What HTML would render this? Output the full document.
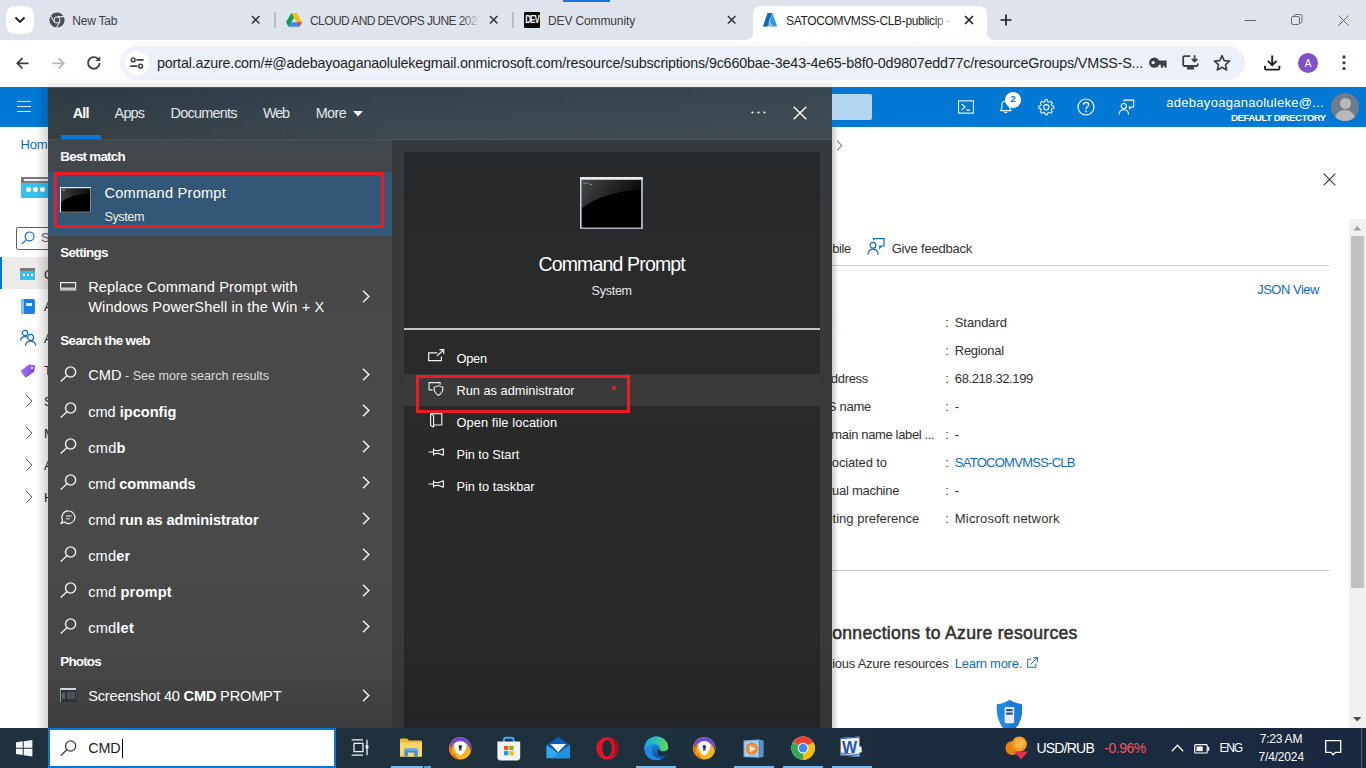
<!DOCTYPE html>
<html lang="en"><head><meta charset="utf-8"><title>SATOCOMVMSS-CLB-publicip - Microsoft Azure</title><style>
*{margin:0;padding:0;box-sizing:border-box}
html,body{width:1366px;height:768px;overflow:hidden;background:#fff}
body{font-family:"Liberation Sans",sans-serif;position:relative}
.a{position:absolute}
.t{position:absolute;white-space:nowrap;line-height:1;font-family:"Liberation Sans",sans-serif}
svg{position:absolute;overflow:visible}
b{font-weight:700}
</style></head><body>
<div class="a" id="tabstrip" style="left:0;top:0;width:1366px;height:40px;background:#dfe3eb"></div>
<div class="a" style="left:6px;top:6px;width:28px;height:28px;border-radius:9px;background:#fff"></div>
<svg style="left:14px;top:16px" width="12" height="8" viewBox="0 0 12 8"><path d="M1.5 1.5 L6 6 L10.5 1.5" fill="none" stroke="#1f1f1f" stroke-width="1.9"/></svg>
<div class="a" style="left:563px;top:0;width:47px;height:1.5px;background:#1a73e8"></div>
<!-- toolbar -->
<div class="a" style="left:0;top:40px;width:1366px;height:47px;background:#fff;border-radius:9px 9px 0 0"></div>
<!-- active tab -->
<svg style="left:745px;top:6px" width="250" height="34" viewBox="0 0 250 35" preserveAspectRatio="none"><path d="M0 35 Q8 35 8 27 L8 9 Q8 0 17 0 L233 0 Q242 0 242 9 L242 27 Q242 35 250 35 Z" fill="#fff"/></svg>
<!-- tab separators -->
<div class="a" style="left:274px;top:12px;width:2px;height:16px;background:#b9bcc4"></div>
<div class="a" style="left:512px;top:12px;width:2px;height:16px;background:#b9bcc4"></div>
<!-- tab1 icon: chrome grey -->
<svg style="left:49px;top:12px" width="16" height="16" viewBox="0 0 16 16"><circle cx="8" cy="8" r="7.6" fill="#4a4d51"/><circle cx="8" cy="8" r="3.4" fill="#dfe3eb"/><circle cx="8" cy="8" r="2.4" fill="#4a4d51"/><path d="M8 4.6 L15 4.6 M5.1 9.7 L1.6 3.7 M10.9 9.7 L7.4 15.6" stroke="#dfe3eb" stroke-width="1.1"/></svg>
<span class="t" style="font-size:12px;top:15.02px;color:#3c4043;left:72.3px;letter-spacing:-0.212px;">New Tab</span>
<svg style="left:251px;top:15px" width="9.4" height="9.4" viewBox="0 0 10 10"><path d="M1 1 L9 9 M9 1 L1 9" stroke="#2d2f33" stroke-width="1.55"/></svg>
<!-- tab2 drive icon -->
<svg style="left:286px;top:13px" width="16" height="14" viewBox="0 0 16 14"><path d="M5.4 0 L10.6 0 L16 9.3 L10.8 9.3 Z" fill="#fbbc04"/><path d="M5.4 0 L0 9.3 L2.6 13.8 L8 4.5 Z" fill="#0f9d58"/><path d="M2.6 13.8 L13.4 13.8 L16 9.3 L5.2 9.3 Z" fill="#4285f4"/><path d="M10.8 9.3 L16 9.3 L13.4 13.8 Z" fill="#ea4335"/></svg>
<span class="t" style="font-size:12px;top:15.02px;color:#3c4043;left:310px;letter-spacing:-0.576px;">CLOUD AND DEVOPS JUNE 202</span>
<div class="a" style="left:462px;top:10px;width:18px;height:22px;background:linear-gradient(90deg,rgba(223,227,235,0),#dfe3eb)"></div>
<svg style="left:489px;top:15px" width="9.4" height="9.4" viewBox="0 0 10 10"><path d="M1 1 L9 9 M9 1 L1 9" stroke="#2d2f33" stroke-width="1.55"/></svg>
<!-- tab3 dev icon -->
<div class="a" style="left:524px;top:12px;width:16px;height:16px;background:#0a0a0a;border-radius:1px"></div>
<span class="t" style="font-size:8px;top:16.38px;color:#fff;font-weight:700;left:525.2px;letter-spacing:-0.951px;transform-origin:0 50%;transform:scaleY(1.35);">DEV</span><span class="t" style="font-size:12px;top:15.02px;color:#3c4043;left:548px;letter-spacing:-0.130px;">DEV Community</span>
<svg style="left:727px;top:15px" width="9.4" height="9.4" viewBox="0 0 10 10"><path d="M1 1 L9 9 M9 1 L1 9" stroke="#2d2f33" stroke-width="1.55"/></svg>
<!-- tab4 azure icon -->
<svg style="left:762px;top:12px" width="16" height="16" viewBox="0 0 16 16"><path d="M5.6 1 L10.2 1 L5.3 14.6 L1 14.6 Z" fill="#1277c9"/><path d="M10.3 1 L15.2 14.6 L6.3 14.6 L10.6 13.8 L7.5 9.9 L9.2 5 Z" fill="#2a9be6"/><path d="M5.6 1 L10.2 1 L8.6 5.6 L6.2 9.3 L9.8 13.6 L5.3 14.6 L1 14.6 Z" fill="#0f5ea8" opacity=".55"/></svg>
<span class="t" style="font-size:12px;top:15.02px;color:#1f1f1f;left:786px;letter-spacing:-0.344px;">SATOCOMVMSS-CLB-publicip -</span>
<div class="a" style="left:934px;top:10px;width:18px;height:22px;background:linear-gradient(90deg,rgba(255,255,255,0),#fff)"></div>
<svg style="left:964px;top:15px" width="10" height="10" viewBox="0 0 10 10"><path d="M1 1 L9 9 M9 1 L1 9" stroke="#1f1f1f" stroke-width="1.6"/></svg>
<svg style="left:1000px;top:14px" width="12" height="12" viewBox="0 0 12 12"><path d="M6 0.5 V11.5 M0.5 6 H11.5" stroke="#1f1f1f" stroke-width="1.7"/></svg>
<!-- window controls -->
<div class="a" style="left:1245px;top:20px;width:11px;height:1px;background:#5f6368"></div>
<svg style="left:1291px;top:14px" width="12" height="12" viewBox="0 0 12 12"><rect x="0.5" y="2.5" width="8" height="8" rx="1.5" fill="none" stroke="#6b6f75" stroke-width="1"/><path d="M3 2.5 V2 Q3 0.5 4.5 0.5 H9.5 Q11 0.5 11 2 V7.5 Q11 9 9.5 9 H9" fill="none" stroke="#6b6f75" stroke-width="1"/></svg>
<svg style="left:1338px;top:15px" width="11" height="11" viewBox="0 0 11 11"><path d="M0.5 0.5 L10.5 10.5 M10.5 0.5 L0.5 10.5" stroke="#5f6368" stroke-width="1"/></svg>
<!-- nav buttons -->
<svg style="left:16px;top:56.6px" width="13" height="12.6" viewBox="0 0 15 14"><path d="M7.5 1 L1.5 7 L7.5 13 M1.5 7 H14.5" fill="none" stroke="#3c4043" stroke-width="2"/></svg>
<svg style="left:52px;top:56.6px" width="13" height="12.6" viewBox="0 0 15 14"><path d="M7.5 1 L13.5 7 L7.5 13 M13.5 7 H0.5" fill="none" stroke="#b4b7bb" stroke-width="2"/></svg>
<svg style="left:86px;top:55px" width="16" height="16" viewBox="0 0 16 16"><path d="M13.6 8 A5.8 5.8 0 1 1 11.9 3.8" fill="none" stroke="#3c4043" stroke-width="1.8"/><path d="M14.2 1.2 V6 H9.4 Z" fill="#3c4043"/></svg>
<!-- omnibox -->
<div class="a" style="left:120px;top:46px;width:1125px;height:34px;border-radius:17px;background:#edf1fa"></div>
<div class="a" style="left:125px;top:51px;width:24px;height:24px;border-radius:12px;background:#fff"></div>
<svg style="left:130px;top:57px" width="14" height="12" viewBox="0 0 14 12"><path d="M7 2.8 H13 M1 9.2 H6.6" stroke="#3c4043" stroke-width="1.7" stroke-linecap="round"/><circle cx="3.2" cy="2.8" r="1.9" fill="none" stroke="#3c4043" stroke-width="1.5"/><circle cx="10.6" cy="9.2" r="1.9" fill="none" stroke="#3c4043" stroke-width="1.5"/></svg>
<span class="t" style="font-size:14.3px;top:56.27px;color:#1f1f1f;left:157px;letter-spacing:-0.180px;">portal.azure.com/#@adebayoaganaolulekegmail.onmicrosoft.com/resource/subscriptions/9c660bae-3e43-4e65-b8f0-0d9807edd77c/resourceGroups/VMSS-S...</span>
<!-- key icon -->
<svg style="left:1149.2px;top:57.4px" width="18" height="12" viewBox="0 0 18 12"><circle cx="5.3" cy="5.6" r="5.2" fill="#3c4043"/><circle cx="4.2" cy="5.6" r="1.7" fill="#edf1fa"/><path d="M9 3.5 H17.6 V10.8 H15.6 V9 H14 V10.8 H11.8 V7.7 H9 Z" fill="#3c4043"/></svg>
<!-- install icon -->
<svg style="left:1181.6px;top:55.4px" width="17" height="15" viewBox="0 0 17 15"><path d="M8 1.2 H2.4 Q1.2 1.2 1.2 2.4 V9.8 Q1.2 11 2.4 11 H14.6 Q15.8 11 15.8 9.8 V8.6" fill="none" stroke="#3c4043" stroke-width="1.8"/><path d="M5.4 11 H11.6 L12.2 14.4 H4.8 Z" fill="#3c4043"/><path d="M12.6 0.3 V6.4 M9.9 3.8 L12.6 6.6 L15.3 3.8" fill="none" stroke="#3c4043" stroke-width="1.7"/></svg>
<!-- star -->
<svg style="left:1213px;top:54px" width="18" height="17" viewBox="0 0 18 17"><path d="M9 1.6 L11.2 6.6 L16.6 7.1 L12.5 10.7 L13.7 16 L9 13.2 L4.3 16 L5.5 10.7 L1.4 7.1 L6.8 6.6 Z" fill="none" stroke="#3c4043" stroke-width="1.6" stroke-linejoin="round"/></svg>
<!-- download -->
<svg style="left:1264px;top:55px" width="16.4" height="16" viewBox="0 0 16.4 16"><path d="M8.2 0.4 V10 M3.8 5.8 L8.2 10.2 L12.6 5.8" fill="none" stroke="#1f1f1f" stroke-width="1.9"/><path d="M1 10.8 V13.4 Q1 14.6 2.2 14.6 H14.2 Q15.4 14.6 15.4 13.4 V10.8" fill="none" stroke="#1f1f1f" stroke-width="1.9"/></svg>
<!-- avatar -->
<div class="a" style="left:1298px;top:53px;width:20px;height:20px;border-radius:10px;background:#7f50c6"></div>
<span class="t" style="font-size:10px;top:58.80px;color:#fff;left:1308px;transform:translateX(-50%);">A</span>
<svg style="left:1341.8px;top:55.2px" width="4" height="16" viewBox="0 0 4 16"><circle cx="2" cy="2" r="1.65" fill="#3c4043"/><circle cx="2" cy="7.8" r="1.65" fill="#3c4043"/><circle cx="2" cy="13.6" r="1.65" fill="#3c4043"/></svg>

<div class="a" style="left:0;top:87px;width:1366px;height:40px;background:#0078d4"></div>
<div class="a" style="left:17px;top:101px;width:14px;height:1px;background:#dcebf9"></div>
<div class="a" style="left:17px;top:106px;width:14px;height:1px;background:#dcebf9"></div>
<div class="a" style="left:17px;top:111px;width:14px;height:1px;background:#dcebf9"></div>
<div class="a" style="left:600px;top:94px;width:272px;height:26px;border-radius:2px;background:#b3d6f2"></div>
<!-- cloud shell -->
<svg style="left:958px;top:100px" width="16" height="14" viewBox="0 0 18 15"><rect x="0.6" y="0.6" width="16.8" height="13.8" fill="none" stroke="#fff" stroke-width="1.2"/><path d="M4 4 L8 7.5 L4 11 M9.5 11 H13.5" fill="none" stroke="#fff" stroke-width="1.2"/></svg>
<!-- bell -->
<svg style="left:999.4px;top:98.6px" width="13.6" height="15.6" viewBox="0 0 16 18"><path d="M2 13.5 V12.6 L3.4 11 V7 Q3.4 2.6 8 2.6 Q12.6 2.6 12.6 7 V11 L14 12.6 V13.5 Z" fill="none" stroke="#fff" stroke-width="1.2" stroke-linejoin="round"/><path d="M6.3 15 Q8 17.2 9.7 15" fill="none" stroke="#fff" stroke-width="1.2"/></svg>
<div class="a" style="left:1005px;top:92px;width:16px;height:16px;border-radius:8px;background:#fff"></div>
<span class="t" style="font-size:9.8px;top:94.45px;color:#0078d4;font-weight:700;left:1013px;transform:translateX(-50%);">2</span>
<!-- gear -->
<svg style="left:1037.7px;top:98.7px" width="16.6" height="16.6" viewBox="0 0 18 18"><circle cx="9" cy="9" r="2.9" fill="none" stroke="#fff" stroke-width="1.1"/><path d="M7.72 0.90 L10.28 0.90 L10.57 2.90 L12.21 3.58 L13.82 2.37 L15.63 4.18 L14.42 5.79 L15.10 7.43 L17.10 7.72 L17.10 10.28 L15.10 10.57 L14.42 12.21 L15.63 13.82 L13.82 15.63 L12.21 14.42 L10.57 15.10 L10.28 17.10 L7.72 17.10 L7.43 15.10 L5.79 14.42 L4.18 15.63 L2.37 13.82 L3.58 12.21 L2.90 10.57 L0.90 10.28 L0.90 7.72 L2.90 7.43 L3.58 5.79 L2.37 4.18 L4.18 2.37 L5.79 3.58 L7.43 2.90 Z" fill="none" stroke="#fff" stroke-width="1.1" stroke-linejoin="round"/></svg>
<!-- help -->
<svg style="left:1077px;top:98px" width="18" height="18" viewBox="0 0 18 18"><circle cx="9" cy="9" r="8" fill="none" stroke="#fff" stroke-width="1.2"/><path d="M6.4 7 Q6.4 4.4 9 4.4 Q11.6 4.4 11.6 6.8 Q11.6 8.2 10.2 9 Q9 9.8 9 11.2" fill="none" stroke="#fff" stroke-width="1.3"/><circle cx="9" cy="13.4" r="0.9" fill="#fff"/></svg>
<!-- feedback -->
<svg style="left:1118px;top:98.6px" width="16.6" height="16.6" viewBox="0 0 19 18"><circle cx="6.6" cy="7.6" r="3" fill="none" stroke="#fff" stroke-width="1.2"/><path d="M1 17.4 Q1.6 11.8 6.6 11.8 Q11.6 11.8 12.2 17.4" fill="none" stroke="#fff" stroke-width="1.2"/><path d="M7 2.6 V0.8 H18 V8.6 H15.4 L13.6 10.6 V8.6 H12" fill="none" stroke="#fff" stroke-width="1.2"/></svg>
<span class="t" style="font-size:13px;top:96.02px;color:#fff;left:1166.3px;letter-spacing:0.280px;">adebayoaganaoluleke@...</span><span class="t" style="font-size:9.7px;top:113.02px;color:#fff;font-weight:700;left:1231px;letter-spacing:-0.492px;">DEFAULT DIRECTORY</span>
<div class="a" style="left:1331px;top:93px;width:28px;height:28px;border-radius:14px;background:#6f7c8c;overflow:hidden"><div class="a" style="left:8.5px;top:5px;width:11px;height:11px;border-radius:6px;background:#b9b9b9"></div><div class="a" style="left:4px;top:16.5px;width:20px;height:16px;border-radius:9px 9px 0 0;background:#b9b9b9"></div></div>

<!-- left blade (clipped at panel) -->
<div class="a" style="left:0;top:127px;width:48px;height:601px;overflow:hidden">
  <div class="a" style="left:0;top:130px;width:60px;height:32px;background:#edebe9"></div>
  <div class="a" style="left:0;top:130px;width:2px;height:32px;background:#0078d4"></div>
  <div class="a" style="left:16px;top:100px;width:60px;height:23px;border:1px solid #605e5c;border-radius:2px;background:#fff"></div>
  <svg style="left:21px;top:104px" width="14" height="14" viewBox="0 0 14 14"><circle cx="8.6" cy="5.4" r="4.4" fill="none" stroke="#0f6cbd" stroke-width="1.2"/><path d="M5.4 8.6 L0.8 13.2" stroke="#0f6cbd" stroke-width="1.2"/></svg>
  <!-- resource icon -->
  <div class="a" style="left:21px;top:50px;width:40px;height:21px;background:#35c3ee;border-radius:1px"></div>
  <div class="a" style="left:21px;top:50px;width:40px;height:6px;background:#7a7a7a"></div>
  <div class="a" style="left:24px;top:52px;width:34px;height:2px;background:#f2f2f2"></div>
  <div class="a" style="left:26px;top:60px;width:5px;height:5px;border-radius:3px;background:#fff"></div>
  <div class="a" style="left:33px;top:60px;width:5px;height:5px;border-radius:3px;background:#fff"></div>
  <div class="a" style="left:40px;top:60px;width:5px;height:5px;border-radius:3px;background:#fff"></div>
  <!-- small overview icon -->
  <div class="a" style="left:20px;top:141px;width:15px;height:12px;background:#35c3ee"></div>
  <div class="a" style="left:20px;top:141px;width:15px;height:3px;background:#7a7a7a"></div>
  <div class="a" style="left:22.5px;top:147px;width:2px;height:2px;background:#fff"></div><div class="a" style="left:26.5px;top:147px;width:2px;height:2px;background:#fff"></div><div class="a" style="left:30.5px;top:147px;width:2px;height:2px;background:#fff"></div>
  <!-- book -->
  <div class="a" style="left:21px;top:172px;width:14px;height:15px;border-radius:2px;background:#1f7fe0"></div>
  <div class="a" style="left:21px;top:172px;width:3px;height:15px;border-radius:2px 0 0 2px;background:#7cc0f5"></div>
  <div class="a" style="left:26px;top:176px;width:6px;height:3px;background:#e6f2fd"></div>
  <!-- people -->
  <svg style="left:20px;top:202px" width="17" height="17" viewBox="0 0 17 17"><circle cx="5" cy="4" r="2.7" fill="none" stroke="#0f6cbd" stroke-width="1.2"/><path d="M0.6 11.5 Q1 7.6 5 7.6 Q6.6 7.6 7.6 8.4" fill="none" stroke="#0f6cbd" stroke-width="1.2"/><circle cx="10.6" cy="8.4" r="3" fill="none" stroke="#0f6cbd" stroke-width="1.2"/><path d="M5.4 16.6 Q6 12.2 10.6 12.2 Q15.2 12.2 15.8 16.6" fill="none" stroke="#0f6cbd" stroke-width="1.2"/></svg>
  <!-- tag -->
  <svg style="left:20.6px;top:234.6px" width="16" height="16" viewBox="0 0 16 16"><defs><linearGradient id="tg" x1="0" y1="0" x2="1" y2="1"><stop offset="0" stop-color="#a67af4"/><stop offset="1" stop-color="#773adc"/></linearGradient></defs><g transform="rotate(-36 8 8)"><path d="M0.6 5 Q0.6 3.6 2 3.6 H11.2 L15.6 8 L11.2 12.4 H2 Q0.6 12.4 0.6 11 Z" fill="url(#tg)"/><circle cx="11.6" cy="8" r="1.2" fill="#f1e9ff"/></g></svg>
  <svg style="left:25px;top:267px" width="8" height="14" viewBox="0 0 8 14"><path d="M1 1 L7 7 L1 13" fill="none" stroke="#605e5c" stroke-width="1"/></svg><svg style="left:25px;top:299px" width="8" height="14" viewBox="0 0 8 14"><path d="M1 1 L7 7 L1 13" fill="none" stroke="#605e5c" stroke-width="1"/></svg><svg style="left:25px;top:331px" width="8" height="14" viewBox="0 0 8 14"><path d="M1 1 L7 7 L1 13" fill="none" stroke="#605e5c" stroke-width="1"/></svg><svg style="left:25px;top:363px" width="8" height="14" viewBox="0 0 8 14"><path d="M1 1 L7 7 L1 13" fill="none" stroke="#605e5c" stroke-width="1"/></svg>
  <span class="t" style="left:20.4px;top:11px;font-size:13px;color:#0f6cbd;letter-spacing:-0.1px">Home</span>
  <span class="t" style="left:41px;top:104px;font-size:13px;color:#605e5c">Search</span>
  <span class="t" style="left:44px;top:141px;font-size:13px;color:#201f1e">Overview</span>
  <span class="t" style="left:44px;top:173px;font-size:13px;color:#201f1e">Activity log</span>
  <span class="t" style="left:44px;top:205px;font-size:13px;color:#201f1e">Access control (IAM)</span>
  <span class="t" style="left:44px;top:237px;font-size:13px;color:#201f1e">Tags</span>
  <span class="t" style="left:44px;top:268px;font-size:13px;color:#201f1e">Settings</span>
  <span class="t" style="left:44px;top:300px;font-size:13px;color:#201f1e">Monitoring</span>
  <span class="t" style="left:44px;top:332px;font-size:13px;color:#201f1e">Automation</span>
  <span class="t" style="left:44px;top:364px;font-size:13px;color:#201f1e">Help</span>
</div>

<!-- right content -->
<svg style="left:836px;top:140px" width="7" height="11" viewBox="0 0 7 11"><path d="M1 0.7 L6 5.5 L1 10.3" fill="none" stroke="#605e5c" stroke-width="1"/></svg>
<svg style="left:1323px;top:173px" width="13" height="13" viewBox="0 0 13 13"><path d="M0.7 0.7 L12.3 12.3 M12.3 0.7 L0.7 12.3" stroke="#323130" stroke-width="1.1"/></svg>
<span class="t" style="font-size:13px;top:242.02px;color:#323130;left:832.2px;letter-spacing:-0.362px;">bile</span>
<svg style="left:867px;top:238px" width="18" height="17" viewBox="0 0 18 17"><circle cx="6" cy="7.2" r="2.9" fill="none" stroke="#0f6cbd" stroke-width="1.2"/><path d="M0.8 16.6 Q1.4 11.2 6 11.2 Q10.6 11.2 11.2 16.6" fill="none" stroke="#0f6cbd" stroke-width="1.2"/><path d="M6.6 2.4 V0.7 H17 V8 H14.6 L12.8 9.9 V8 H11.6" fill="none" stroke="#0f6cbd" stroke-width="1.2"/></svg>
<span class="t" style="font-size:13px;top:242.02px;color:#323130;left:891.7px;letter-spacing:-0.208px;">Give feedback</span>
<div class="a" style="left:832px;top:265px;width:497px;height:1px;background:#c8c6c4"></div>
<div class="a" style="left:832px;top:270px;width:497px;height:1px;background:#f0efee"></div>
<span class="t" style="font-size:13px;top:283.02px;color:#0f6cbd;left:1257.2px;letter-spacing:-0.493px;">JSON View</span><span class="t" style="font-size:13px;top:316.02px;color:#0f6cbd;right:533.5px;letter-spacing:-0.2px;">SKU</span><span class="t" style="font-size:13px;top:316.02px;color:#323130;left:945.3px;">:</span><span class="t" style="font-size:13px;top:316.02px;color:#323130;left:954.8px;letter-spacing:-0.096px;">Standard</span><span class="t" style="font-size:13px;top:344.02px;color:#323130;right:540px;letter-spacing:-0.2px;">Tier</span><span class="t" style="font-size:13px;top:344.02px;color:#323130;left:945.3px;">:</span><span class="t" style="font-size:13px;top:344.02px;color:#323130;left:954.8px;letter-spacing:-0.291px;">Regional</span><span class="t" style="font-size:13px;top:372.02px;color:#323130;right:498px;letter-spacing:-0.3px;">IP address</span><span class="t" style="font-size:13px;top:372.02px;color:#323130;left:945.3px;">:</span><span class="t" style="font-size:13px;top:372.02px;color:#323130;left:954.8px;letter-spacing:-0.395px;">68.218.32.199</span><span class="t" style="font-size:13px;top:400.02px;color:#323130;right:495px;letter-spacing:-0.27px;">DNS name</span><span class="t" style="font-size:13px;top:400.02px;color:#323130;left:945.3px;">:</span><span class="t" style="font-size:13px;top:400.02px;color:#323130;left:954.8px;">-</span><span class="t" style="font-size:13px;top:428.02px;color:#323130;right:431.7px;letter-spacing:-0.36px;">Domain name label ...</span><span class="t" style="font-size:13px;top:428.02px;color:#323130;left:945.3px;">:</span><span class="t" style="font-size:13px;top:428.02px;color:#323130;left:954.8px;">-</span><span class="t" style="font-size:13px;top:456.02px;color:#323130;right:479.2px;letter-spacing:-0.14px;">Associated to</span><span class="t" style="font-size:13px;top:456.02px;color:#323130;left:945.3px;">:</span><span class="t" style="font-size:13px;top:456.02px;color:#0f6cbd;left:954.8px;letter-spacing:-0.732px;">SATOCOMVMSS-CLB</span><span class="t" style="font-size:13px;top:484.02px;color:#323130;right:466.9px;letter-spacing:-0.28px;">Virtual machine</span><span class="t" style="font-size:13px;top:484.02px;color:#323130;left:945.3px;">:</span><span class="t" style="font-size:13px;top:484.02px;color:#323130;left:954.8px;">-</span><span class="t" style="font-size:13px;top:512.02px;color:#323130;right:446.7px;letter-spacing:0px;">Routing preference</span><span class="t" style="font-size:13px;top:512.02px;color:#323130;left:945.3px;">:</span><span class="t" style="font-size:13px;top:512.02px;color:#323130;left:954.8px;letter-spacing:0.184px;">Microsoft network</span>
<div class="a" style="left:832px;top:570px;width:497px;height:1px;background:#c8c6c4"></div>
<span class="t" style="font-size:17.6px;top:625.02px;color:#323130;left:832.2px;letter-spacing:0.304px;-webkit-text-stroke:0.55px #323130;">onnections to Azure resources</span><span class="t" style="font-size:13px;top:657.02px;color:#323130;left:832.2px;letter-spacing:-0.260px;">ious Azure resources</span><span class="t" style="font-size:13px;top:657.02px;color:#0f6cbd;left:954.8px;letter-spacing:-0.263px;">Learn more.</span>
<svg style="left:1027px;top:657px" width="11" height="11" viewBox="0 0 11 11"><path d="M4.4 2.2 H0.7 V10.3 H8.8 V6.6 M3.6 7.4 L10.2 0.8 M6.4 0.6 H10.4 V4.6" fill="none" stroke="#0f6cbd" stroke-width="1"/></svg>
<!-- shield -->
<svg style="left:995.6px;top:698.6px" width="26.8" height="37" viewBox="0 0 28 38"><path d="M14 0.4 Q19.6 4.4 27 5 Q29.4 24 14 37.4 Q-1.4 24 1 5 Q8.4 4.4 14 0.4 Z" fill="#2188e4"/><path d="M14 0.4 Q19.6 4.4 27 5 Q29.4 24 14 37.4 Z" fill="#1a7bd8"/><rect x="9" y="8" width="10" height="17" rx="1.2" fill="#e9edf2"/><rect x="10.6" y="10.2" width="6.8" height="2.2" fill="#1c4f8f"/><rect x="10.6" y="13.8" width="6.8" height="2.2" fill="#1c4f8f"/></svg>
<!-- scrollbar -->
<div class="a" style="left:1349px;top:219px;width:17px;height:509px;background:#f1f1f1"></div>
<div class="a" style="left:1351px;top:236px;width:13px;height:352px;background:#c1c1c1"></div>
<svg style="left:1353.4px;top:225.6px" width="8.4" height="4.6" viewBox="0 0 9 5"><path d="M0 5 L4.5 0 L9 5 Z" fill="#a3a3a3"/></svg>
<svg style="left:1353.4px;top:716.5px" width="8.4" height="4.6" viewBox="0 0 9 5"><path d="M0 0 L4.5 5 L9 0 Z" fill="#505050"/></svg>

<!-- shadow left of panel -->
<div class="a" style="left:36px;top:87px;width:12px;height:641px;background:linear-gradient(90deg,rgba(0,0,0,0),rgba(0,0,0,.16))"></div>
<div class="a" style="left:48px;top:78px;width:784px;height:9px;background:linear-gradient(180deg,rgba(0,0,0,0),rgba(0,0,0,.09))"></div>
<div class="a" style="left:832px;top:127px;width:7px;height:601px;background:linear-gradient(90deg,rgba(0,0,0,.2),rgba(0,0,0,0))"></div>
<div class="a" id="panel" style="left:48px;top:87px;width:784px;height:641px;background:#2f3336;overflow:hidden">
  <!-- header -->
  <div class="a" style="left:0;top:0;width:784px;height:53px;background:linear-gradient(90deg,rgba(0,0,0,.12) 0%,rgba(0,0,0,0) 45%,rgba(255,255,255,.02) 100%),linear-gradient(180deg,#33424e 0%,#3a464f 55%,#3f474c 100%)"></div>
  <div class="a" style="left:0;top:0;width:784px;height:1px;background:#1f5e96"></div>
  <div class="a" style="left:0;top:52px;width:784px;height:1px;background:#4a5359"></div>
  <!-- left column -->
  <div class="a" style="left:0;top:53px;width:344px;height:588px;background:linear-gradient(180deg,#41484d 0%,#454647 12%,#494949 35%,#4a4a4a 60%,#474747 88%,#3d3d3d 100%)"></div>
  <!-- right column -->
  <div class="a" style="left:344px;top:53px;width:440px;height:588px;background:linear-gradient(180deg,#33393d 0%,#39393a 18%,#3a3a3a 85%,#343434 100%)"></div>
  <div class="a" style="left:356px;top:65px;width:416px;height:576px;background:linear-gradient(180deg,#26292b 0%,#2a2a2a 22%,#292929 80%,#242526 100%)"></div>
  <!-- tab underline -->
  <div class="a" style="left:13px;top:48px;width:40px;height:4px;background:#0a78d7"></div>
  <!-- selected -->
  <div class="a" style="left:0;top:85px;width:344px;height:64px;background:#335877"></div>
  <div class="a" style="left:6px;top:85px;width:330px;height:56px;border:3px solid #ed1c24"></div>
  <!-- cmd icon small -->
  <svg style="left:12px;top:99.6px" width="31" height="25.6" viewBox="0 0 31 25.6"><defs><linearGradient id="cg1" x1="0" y1="0" x2="1" y2="0"><stop offset="0" stop-color="#3c3c3c"/><stop offset="1" stop-color="#0c0c0c"/></linearGradient></defs><rect x="0" y="0" width="31" height="25.6" fill="#000"/><path d="M1 1 H30 V6.2 Q12 7 1 15 Z" fill="url(#cg1)"/><path d="M0.5 25.6 V0.6 H31" fill="none" stroke="#e4e4e4" stroke-width="1.1"/><path d="M30.5 1 V25.1 H1" fill="none" stroke="#8a8a8a" stroke-width="1"/><rect x="2.4" y="2.6" width="2.6" height="0.9" fill="#bbb"/></svg>
  <!-- hover row in actions -->
  <div class="a" style="left:356px;top:287px;width:416px;height:32px;background:#3a3a3a"></div>
  <div class="a" style="left:356px;top:241px;width:416px;height:2px;background:#c2c2c2"></div>
  <div class="a" style="left:368px;top:288px;width:214px;height:38px;border:3px solid #ed1c24"></div>
  <div class="a" style="left:563.6px;top:298.8px;width:4.4px;height:4.4px;border-radius:2.2px;background:#ed1c24"></div>
  <!-- big cmd icon -->
  <svg style="left:532.4px;top:89.8px" width="62.8" height="52" viewBox="0 0 62.2 51.6" preserveAspectRatio="none"><defs><linearGradient id="cg2" x1="0" y1="0" x2="1" y2="0.3"><stop offset="0" stop-color="#474747"/><stop offset="1" stop-color="#0a0a0a"/></linearGradient></defs><rect x="0" y="0" width="62.2" height="51.6" fill="#000"/><path d="M1.5 3 H60.7 V12.6 Q24 14 1.5 31 Z" fill="url(#cg2)"/><path d="M0.8 51.6 V1.4 H61.4 V51.6" fill="none" stroke="#c9cfdb" stroke-width="1.6"/><path d="M0 1.4 H62.2" stroke="#e6e9ef" stroke-width="2.8"/><path d="M0 50.9 H62.2" stroke="#aab2c2" stroke-width="1.4"/><path d="M3.4 6.2 H6.6 M7.6 6.2 H9 M9.8 7.4 H11.6" stroke="#9a9a9a" stroke-width="1"/></svg>
</div>
<span class="t" style="font-size:14.4px;top:106.02px;color:#fff;left:72.7px;letter-spacing:-0.797px;"><b>All</b></span><span class="t" style="font-size:14.4px;top:106.02px;color:#e4e6e8;left:114.6px;letter-spacing:-0.803px;">Apps</span><span class="t" style="font-size:14.4px;top:106.02px;color:#e4e6e8;left:170.5px;letter-spacing:-0.722px;">Documents</span><span class="t" style="font-size:14.4px;top:106.02px;color:#e4e6e8;left:263px;letter-spacing:-1.115px;">Web</span><span class="t" style="font-size:14.4px;top:106.02px;color:#e4e6e8;left:315.7px;letter-spacing:-0.574px;">More</span><svg style="left:353px;top:111px" width="10" height="6" viewBox="0 0 10 6"><path d="M0 0 H10 L5 5.6 Z" fill="#f0f0f0"/></svg><svg style="left:751px;top:111px" width="15" height="3" viewBox="0 0 15 3"><circle cx="1.5" cy="1.5" r="1.1" fill="#fff"/><circle cx="7.5" cy="1.5" r="1.1" fill="#fff"/><circle cx="13.5" cy="1.5" r="1.1" fill="#fff"/></svg><svg style="left:793px;top:106px" width="14" height="14" viewBox="0 0 14 14"><path d="M0.7 0.7 L13.3 13.3 M13.3 0.7 L0.7 13.3" stroke="#fff" stroke-width="1.4"/></svg><span class="t" style="font-size:13.4px;top:150.02px;color:#fff;left:60.3px;letter-spacing:-0.759px;"><b>Best match</b></span><span class="t" style="font-size:14.6px;top:186.02px;color:#fff;left:104.4px;letter-spacing:0.227px;">Command Prompt</span><span class="t" style="font-size:12.6px;top:211.02px;color:#f0f0f0;left:104.4px;letter-spacing:-0.400px;">System</span><span class="t" style="font-size:13.4px;top:246.02px;color:#fff;left:60.3px;letter-spacing:-0.666px;"><b>Settings</b></span><svg style="left:60px;top:281.6px" width="16.2" height="8.6" viewBox="0 0 16.2 8.6"><rect x="0.6" y="0.6" width="15" height="5.6" fill="none" stroke="#f0f0f0" stroke-width="1.2"/><path d="M0 7.9 H16.2" stroke="#f0f0f0" stroke-width="1.2"/></svg><span class="t" style="font-size:14.6px;top:280.02px;color:#fff;left:88.2px;letter-spacing:0.129px;">Replace Command Prompt with</span><span class="t" style="font-size:14.6px;top:300.02px;color:#fff;left:88.2px;letter-spacing:0.115px;">Windows PowerShell in the Win + X</span><svg style="left:362px;top:289.5px" width="8" height="13" viewBox="0 0 8 13"><path d="M1 0.8 L6.8 6.5 L1 12.2" fill="none" stroke="#ececec" stroke-width="1.6"/></svg><span class="t" style="font-size:13.4px;top:334.02px;color:#fff;left:60.3px;letter-spacing:-0.624px;"><b>Search the web</b></span><svg style="left:60px;top:366.3px" width="17" height="16" viewBox="0 0 17 16"><circle cx="10.6" cy="6" r="5.1" fill="none" stroke="#f0f0f0" stroke-width="1.4"/><path d="M6.9 9.7 L0.7 15.4" stroke="#f0f0f0" stroke-width="1.4"/></svg><span class="t" style="font-size:14.6px;top:368.02px;color:#fff;left:88.2px;">CMD<span style="font-size:12.6px;color:#dcdcdc"> - See more search results</span></span><svg style="left:362px;top:367.9px" width="8" height="13" viewBox="0 0 8 13"><path d="M1 0.8 L6.8 6.5 L1 12.2" fill="none" stroke="#ececec" stroke-width="1.6"/></svg><svg style="left:60px;top:402.3px" width="17" height="16" viewBox="0 0 17 16"><circle cx="10.6" cy="6" r="5.1" fill="none" stroke="#f0f0f0" stroke-width="1.4"/><path d="M6.9 9.7 L0.7 15.4" stroke="#f0f0f0" stroke-width="1.4"/></svg><span class="t" style="font-size:14.6px;top:405.02px;color:#fff;left:88.2px;letter-spacing:-0.015px;">cmd <b>ipconfig</b></span><svg style="left:362px;top:403.9px" width="8" height="13" viewBox="0 0 8 13"><path d="M1 0.8 L6.8 6.5 L1 12.2" fill="none" stroke="#ececec" stroke-width="1.6"/></svg><svg style="left:60px;top:438.3px" width="17" height="16" viewBox="0 0 17 16"><circle cx="10.6" cy="6" r="5.1" fill="none" stroke="#f0f0f0" stroke-width="1.4"/><path d="M6.9 9.7 L0.7 15.4" stroke="#f0f0f0" stroke-width="1.4"/></svg><span class="t" style="font-size:14.6px;top:441.02px;color:#fff;left:88.2px;letter-spacing:0.250px;">cmd<b>b</b></span><svg style="left:362px;top:439.9px" width="8" height="13" viewBox="0 0 8 13"><path d="M1 0.8 L6.8 6.5 L1 12.2" fill="none" stroke="#ececec" stroke-width="1.6"/></svg><svg style="left:60px;top:474.3px" width="17" height="16" viewBox="0 0 17 16"><circle cx="10.6" cy="6" r="5.1" fill="none" stroke="#f0f0f0" stroke-width="1.4"/><path d="M6.9 9.7 L0.7 15.4" stroke="#f0f0f0" stroke-width="1.4"/></svg><span class="t" style="font-size:14.6px;top:477.02px;color:#fff;left:88.2px;letter-spacing:-0.114px;">cmd <b>commands</b></span><svg style="left:362px;top:475.9px" width="8" height="13" viewBox="0 0 8 13"><path d="M1 0.8 L6.8 6.5 L1 12.2" fill="none" stroke="#ececec" stroke-width="1.6"/></svg><svg style="left:60px;top:509.9px" width="17" height="16" viewBox="0 0 17 16"><path d="M8.8 1 A6.3 6.3 0 1 1 4.4 12 L1 13.6 L2.6 10.2 A6.3 6.3 0 0 1 8.8 1 Z" fill="none" stroke="#f0f0f0" stroke-width="1.2" stroke-linejoin="round"/><path d="M6 6 H11.6 M6 8.8 H9.6" stroke="#f0f0f0" stroke-width="1.1"/></svg><span class="t" style="font-size:14.6px;top:513.02px;color:#fff;left:88.2px;letter-spacing:-0.101px;">cmd <b>run as administrator</b></span><svg style="left:362px;top:511.9px" width="8" height="13" viewBox="0 0 8 13"><path d="M1 0.8 L6.8 6.5 L1 12.2" fill="none" stroke="#ececec" stroke-width="1.6"/></svg><svg style="left:60px;top:546.3px" width="17" height="16" viewBox="0 0 17 16"><circle cx="10.6" cy="6" r="5.1" fill="none" stroke="#f0f0f0" stroke-width="1.4"/><path d="M6.9 9.7 L0.7 15.4" stroke="#f0f0f0" stroke-width="1.4"/></svg><span class="t" style="font-size:14.6px;top:549.02px;color:#fff;left:88.2px;letter-spacing:0.125px;">cmd<b>er</b></span><svg style="left:362px;top:547.9px" width="8" height="13" viewBox="0 0 8 13"><path d="M1 0.8 L6.8 6.5 L1 12.2" fill="none" stroke="#ececec" stroke-width="1.6"/></svg><svg style="left:60px;top:582.3px" width="17" height="16" viewBox="0 0 17 16"><circle cx="10.6" cy="6" r="5.1" fill="none" stroke="#f0f0f0" stroke-width="1.4"/><path d="M6.9 9.7 L0.7 15.4" stroke="#f0f0f0" stroke-width="1.4"/></svg><span class="t" style="font-size:14.6px;top:585.02px;color:#fff;left:88.2px;letter-spacing:0.171px;">cmd <b>prompt</b></span><svg style="left:362px;top:583.9px" width="8" height="13" viewBox="0 0 8 13"><path d="M1 0.8 L6.8 6.5 L1 12.2" fill="none" stroke="#ececec" stroke-width="1.6"/></svg><svg style="left:60px;top:618.3px" width="17" height="16" viewBox="0 0 17 16"><circle cx="10.6" cy="6" r="5.1" fill="none" stroke="#f0f0f0" stroke-width="1.4"/><path d="M6.9 9.7 L0.7 15.4" stroke="#f0f0f0" stroke-width="1.4"/></svg><span class="t" style="font-size:14.6px;top:621.02px;color:#fff;left:88.2px;letter-spacing:0.198px;">cmd<b>let</b></span><svg style="left:362px;top:619.9px" width="8" height="13" viewBox="0 0 8 13"><path d="M1 0.8 L6.8 6.5 L1 12.2" fill="none" stroke="#ececec" stroke-width="1.6"/></svg><span class="t" style="font-size:13.4px;top:655.02px;color:#fff;left:60.3px;letter-spacing:-0.798px;"><b>Photos</b></span><div class="a" style="left:60px;top:688px;width:16px;height:14px;background:#2c3238;border-top:2px solid #cfd6dd;border-left:1px solid #8d98a3"><div class="a" style="left:6px;top:2px;width:8px;height:7px;background:#4a535c"></div><div class="a" style="left:1px;top:3px;width:3px;height:6px;background:#59636d"></div></div><span class="t" style="font-size:14.6px;top:689.02px;color:#fff;left:88.2px;letter-spacing:-0.196px;">Screenshot 40 <b>CMD</b> PROMPT</span><svg style="left:362px;top:688.5px" width="8" height="13" viewBox="0 0 8 13"><path d="M1 0.8 L6.8 6.5 L1 12.2" fill="none" stroke="#ececec" stroke-width="1.6"/></svg><span class="t" style="font-size:19.5px;top:255.02px;color:#fff;left:611.7px;transform:translateX(-50%);letter-spacing:-0.837px;">Command Prompt</span><span class="t" style="font-size:12.6px;top:285.02px;color:#e6e6e6;left:611.7px;transform:translateX(-50%);letter-spacing:-0.283px;">System</span><span class="t" style="font-size:12.8px;top:353.02px;color:#fff;left:456.4px;letter-spacing:-0.178px;">Open</span><span class="t" style="font-size:12.8px;top:385.02px;color:#fff;left:456.4px;letter-spacing:0.006px;">Run as administrator</span><span class="t" style="font-size:12.8px;top:417.02px;color:#fff;left:456.4px;letter-spacing:0.106px;">Open file location</span><span class="t" style="font-size:12.8px;top:449.02px;color:#fff;left:456.4px;letter-spacing:-0.043px;">Pin to Start</span><span class="t" style="font-size:12.8px;top:481.02px;color:#fff;left:456.4px;">Pin to taskbar</span>
<svg style="left:427.6px;top:349.4px" width="17" height="13" viewBox="0 0 17 13"><path d="M9.4 3.8 H0.7 V11.6 H13.4 V7.4" fill="none" stroke="#f0f0f0" stroke-width="1.2"/><path d="M9 7 L15.6 0.8 M11.4 0.7 H15.7 V5" fill="none" stroke="#f0f0f0" stroke-width="1.2"/></svg>
<svg style="left:427.8px;top:382.4px" width="16.4" height="14.6" viewBox="0 0 17 16"><path d="M4.4 8.6 H0.7 V0.7 H12.8 V3" fill="none" stroke="#f0f0f0" stroke-width="1.2"/><path d="M11 4 Q13.2 5.4 15.8 5.4 Q16.4 11.6 11 14.8 Q5.6 11.6 6.2 5.4 Q8.8 5.4 11 4 Z" fill="none" stroke="#f0f0f0" stroke-width="1.2" stroke-linejoin="round"/></svg>
<svg style="left:429.6px;top:413px" width="12.6" height="14.6" viewBox="0 0 12.6 14.6"><path d="M0.6 0.6 H11.8 V12 H3.6 M0.6 0.6 V12.4 L3.6 14 V2.6 L0.6 0.6" fill="none" stroke="#f0f0f0" stroke-width="1.15" stroke-linejoin="round"/></svg>
<svg style="left:428px;top:448px" width="16" height="8" viewBox="0 0 16 8"><path d="M0.5 4 H5.5 M5.5 0.6 V7.4 M5.5 1.8 Q8 3 10.5 2.6 L15.4 0.8 V7.2 L10.5 5.4 Q8 5 5.5 6.2" fill="none" stroke="#f0f0f0" stroke-width="1.15" stroke-linejoin="round"/></svg>
<svg style="left:428px;top:480px" width="16" height="8" viewBox="0 0 16 8"><path d="M0.5 4 H5.5 M5.5 0.6 V7.4 M5.5 1.8 Q8 3 10.5 2.6 L15.4 0.8 V7.2 L10.5 5.4 Q8 5 5.5 6.2" fill="none" stroke="#f0f0f0" stroke-width="1.15" stroke-linejoin="round"/></svg>

<div class="a" style="left:0;top:728px;width:1366px;height:40px;background:linear-gradient(90deg,#1e313c 0%,#1d303c 45%,#1b2d3d 68%,#1a2841 100%)"></div>
<!-- start -->
<svg style="left:16px;top:740.4px" width="16.4" height="16.4" viewBox="0 0 17 17"><path d="M0 2.4 L7 1.4 V8 H0 Z M8 1.2 L17 0 V8 H8 Z M0 9 H7 V15.6 L0 14.6 Z M8 9 H17 V17 L8 15.8 Z" fill="#f3f3f3"/></svg>
<!-- search box -->
<div class="a" style="left:48px;top:728px;width:288px;height:40px;background:#fff;border:2px solid #0a78d7"></div>
<svg style="left:60px;top:740px" width="17" height="16" viewBox="0 0 17 16"><circle cx="10.6" cy="6" r="5.1" fill="none" stroke="#3a3a3a" stroke-width="1.3"/><path d="M6.9 9.7 L0.7 15.4" stroke="#3a3a3a" stroke-width="1.3"/></svg><span class="t" style="font-size:14.4px;top:741.02px;color:#1a1a1a;left:88.2px;letter-spacing:-0.160px;">CMD</span>
<div class="a" style="left:121.5px;top:738.5px;width:1px;height:19px;background:#000"></div>
<!-- task view -->
<svg style="left:351px;top:739px" width="18" height="17" viewBox="0 0 18 17"><path d="M0.6 0.8 H12 M0.6 16.2 H12 M3 4.4 H12 V12.6 H3 Z M16 0.8 V16.2" fill="none" stroke="#f3f3f3" stroke-width="1.3"/><rect x="14.6" y="6.4" width="2.8" height="3" fill="#f3f3f3"/></svg>
<!-- explorer -->
<svg style="left:399.7px;top:738.4px" width="22" height="19" viewBox="0 0 22 19"><path d="M0 1.6 Q0 0.4 1.2 0.4 H7 L9 2.4 H20.8 Q22 2.4 22 3.6 V18.6 H0 Z" fill="#f0b62f"/><path d="M0 4.6 H22 V18.6 H0 Z" fill="#fad567"/><path d="M4.4 11.6 Q4.4 10.4 5.6 10.4 H16.4 Q17.6 10.4 17.6 11.6 V18.6 H4.4 Z" fill="#3a8fdd"/><path d="M4.4 11.4 Q4.4 10.4 5.6 10.4 H16.4 Q17.6 10.4 17.6 11.4 V12.6 H4.4 Z" fill="#5fb0ee"/><path d="M7.8 14.6 H14.2 V18.6 H7.8 Z" fill="#fad567"/></svg>
<svg style="left:448.7px;top:736.8px" width="22.6" height="22.6" viewBox="0 0 23 23"><circle cx="11.5" cy="11.5" r="11.3" fill="#f6b71d"/><path d="M11.5 0.2 A11.3 11.3 0 0 0 4 20 Q1.6 12 7.4 5.2 Q9.6 2.6 11.5 0.2 Z" fill="#f07a12"/><path d="M4 20 A11.3 11.3 0 0 0 11.5 22.8 Q6.4 21 4.4 15.4 Z" fill="#e8650e"/><path d="M1.2 7 A11.3 11.3 0 0 1 22.6 9.4 Q22.8 12.6 21.6 14.6 Q21.4 8.8 16.2 5.6 Q10.2 2.6 4.6 6.6 Q2.2 8.6 1.2 12 Q0.6 9.4 1.2 7 Z" fill="#7447d8"/><path d="M11.5 4.4 Q15.4 4.4 17.6 6.8 Q18.8 14.4 11.5 19 Q4.2 14.4 5.4 6.8 Q7.6 4.4 11.5 4.4 Z" fill="#fff"/><circle cx="11.5" cy="10" r="1.8" fill="#2b2f55"/><path d="M10.7 10.6 H12.3 L12.8 13.8 H10.2 Z" fill="#2b2f55"/></svg>
<!-- store -->
<svg style="left:496.8px;top:735.8px" width="23.6" height="24.6" viewBox="0 0 24 25"><path d="M7 7.4 V4.2 Q7 1.8 9.4 1.8 H14.6 Q17 1.8 17 4.2 V7.4" fill="none" stroke="#2bb3ee" stroke-width="2"/><path d="M0.4 5.6 H23.6 V21.6 Q23.6 24.8 20.4 24.8 H3.6 Q0.4 24.8 0.4 21.6 Z" fill="#f3f3f3"/><rect x="7.2" y="10" width="4.3" height="4.3" fill="#f25022"/><rect x="12.5" y="10" width="4.3" height="4.3" fill="#7fba00"/><rect x="7.2" y="15.3" width="4.3" height="4.3" fill="#00a4ef"/><rect x="12.5" y="15.3" width="4.3" height="4.3" fill="#ffb900"/></svg>
<!-- mail -->
<svg style="left:546px;top:736.4px" width="24.4" height="22.6" viewBox="0 0 25 23"><path d="M0.4 9.4 L12.5 0.4 L24.6 9.4 V14 H0.4 Z" fill="#0f5db3"/><path d="M4.6 8.2 H20.4 L12.5 16.6 Z" fill="#f4f9fd"/><path d="M0.4 9.4 L12.5 17.4 L24.6 9.4 V22.8 H0.4 Z" fill="#2fa9ee"/><path d="M24.6 9.4 V22.8 H6 Z" fill="#1f8fe0"/><path d="M0.4 22.8 L12.5 14.6 L24.6 22.8 Z" fill="#35b6f2" opacity=".0"/></svg>
<!-- opera -->
<svg style="left:595.6px;top:737.2px" width="22.6" height="22.6" viewBox="0 0 23 23"><ellipse cx="11.5" cy="11.5" rx="11.3" ry="11.3" fill="#e3122a"/><ellipse cx="11.2" cy="11.5" rx="4.9" ry="8.4" fill="#1d2f3b"/><path d="M14 2 Q22.6 4 22.8 11.5 Q22.6 19 14 21 Q19 17.6 19 11.5 Q19 5.4 14 2 Z" fill="#a70e1f"/></svg>
<!-- edge -->
<svg style="left:643.7px;top:735.8px" width="24.6" height="24.6" viewBox="0 0 25 25"><defs><linearGradient id="eg1" x1="0" y1="0" x2="1" y2="0"><stop offset="0" stop-color="#1fa2e6"/><stop offset=".55" stop-color="#2fc3a8"/><stop offset="1" stop-color="#6bd64a"/></linearGradient><linearGradient id="eg2" x1="0" y1="0" x2="0" y2="1"><stop offset="0" stop-color="#1b8be0"/><stop offset="1" stop-color="#1160b8"/></linearGradient></defs><circle cx="12.5" cy="12.5" r="12.2" fill="url(#eg2)"/><path d="M0.5 10.6 A12.2 12.2 0 0 1 24.6 10.8 Q24.8 15.6 19.6 15.8 Q15 15.6 15.8 12.6 Q15.4 8.6 11.2 8.4 Q4.6 8.6 0.5 14.6 Z" fill="url(#eg1)"/><path d="M15.9 12.8 Q15.4 15.6 19.6 15.8 Q23.4 15.6 24.4 13.2 L24.7 13.2 Q24.6 17 22.8 19.4 Q19.6 21.6 16.4 20.4 Q12.4 18.4 13.6 14.6 Z" fill="#1d2f3b"/><path d="M9.4 12.2 Q8 18.8 15 22.2 Q19.4 23 22.8 19.4 Q17.8 22.2 13.2 19 Q9.6 16.2 9.4 12.2 Z" fill="#0d4c9a"/><path d="M0.4 13.4 Q0.8 20.8 8 24 Q13.6 25.6 17.8 23.4 Q9 23.2 7.8 15.6 Q7.6 11.8 11.2 8.4 Q4 8.8 0.4 13.4 Z" fill="#1d8ae0"/></svg>
<svg style="left:693.2px;top:736.8px" width="22.6" height="22.6" viewBox="0 0 23 23"><circle cx="11.5" cy="11.5" r="11.3" fill="#f6b71d"/><path d="M11.5 0.2 A11.3 11.3 0 0 0 4 20 Q1.6 12 7.4 5.2 Q9.6 2.6 11.5 0.2 Z" fill="#f07a12"/><path d="M4 20 A11.3 11.3 0 0 0 11.5 22.8 Q6.4 21 4.4 15.4 Z" fill="#e8650e"/><path d="M1.2 7 A11.3 11.3 0 0 1 22.6 9.4 Q22.8 12.6 21.6 14.6 Q21.4 8.8 16.2 5.6 Q10.2 2.6 4.6 6.6 Q2.2 8.6 1.2 12 Q0.6 9.4 1.2 7 Z" fill="#7447d8"/><path d="M11.5 4.4 Q15.4 4.4 17.6 6.8 Q18.8 14.4 11.5 19 Q4.2 14.4 5.4 6.8 Q7.6 4.4 11.5 4.4 Z" fill="#fff"/><circle cx="11.5" cy="10" r="1.8" fill="#2b2f55"/><path d="M10.7 10.6 H12.3 L12.8 13.8 H10.2 Z" fill="#2b2f55"/></svg>
<!-- media player -->
<svg style="left:742.6px;top:739px" width="21" height="19.4" viewBox="0 0 22 20"><path d="M0.6 1.4 L17 0.4 V19.6 L0.6 18.6 Z" fill="#86bbe6"/><path d="M17 0.4 L21.6 1.6 V18.4 L17 19.6 Z" fill="#5a93cb"/><path d="M2 3 L15.6 2.2 V17.8 L2 17 Z" fill="#a9d0ef"/><circle cx="9.2" cy="10" r="6.2" fill="#f0761a"/><circle cx="9.2" cy="10" r="5" fill="#f8953a"/><path d="M7.2 6.6 L13 10 L7.2 13.4 Z" fill="#fff"/></svg>
<!-- chrome -->
<svg style="left:790.8px;top:736px" width="24.2" height="24.2" viewBox="0 0 24 24"><circle cx="12" cy="12" r="11.6" fill="#fff"/><path d="M12 12 L1.95 6.2 A11.6 11.6 0 0 1 22.05 6.2 Z" fill="#ea4335"/><path d="M12 12 L22.05 6.2 A11.6 11.6 0 0 1 12 23.6 Z" fill="#fbbc04"/><path d="M12 12 L12 23.6 A11.6 11.6 0 0 1 1.95 6.2 Z" fill="#34a853"/><path d="M12 6.6 H22.2 L22.05 6.2 A11.6 11.6 0 0 0 12 0.4 Z" fill="#ea4335"/><circle cx="12" cy="12" r="5.4" fill="#fff"/><circle cx="12" cy="12" r="4.3" fill="#4285f4"/></svg>
<!-- word -->
<svg style="left:840px;top:736px" width="22" height="21.4" viewBox="0 0 22 21.4"><path d="M0.6 2 L19.4 0.4 V21 L0.6 19.4 Z" fill="#f6f9fd"/><path d="M0.6 2 L19.4 0.4 V1.8 L0.6 3.2 Z" fill="#2c62b8"/><path d="M0.6 16.6 L19.4 18.2 V21 L0.6 19.4 Z" fill="#2c62b8"/><path d="M0.6 17.4 L19.4 19 V19.8 L0.6 18.2 Z" fill="#dfe8f5"/><path d="M15 11.8 L21.2 10.4 L21.8 16 L15.6 17.6 Z" fill="#eef2f8" stroke="#c4cedd" stroke-width=".5"/></svg>
<span class="t" style="font-size:16px;top:740.02px;color:#1b55b5;left:842px;letter-spacing:-0.109px;"><b>W</b></span>
<!-- running indicators -->
<div class="a" style="left:391px;top:766px;width:32px;height:2px;background:#76b9ed"></div>
<div class="a" style="left:424px;top:766px;width:7px;height:2px;background:#5e9dd0"></div>
<div class="a" style="left:636px;top:766px;width:40px;height:2px;background:#76b9ed"></div>
<div class="a" style="left:734px;top:766px;width:40px;height:2px;background:#76b9ed"></div>
<div class="a" style="left:783px;top:766px;width:40px;height:2px;background:#76b9ed"></div>
<div class="a" style="left:832px;top:766px;width:40px;height:2px;background:#76b9ed"></div>
<!-- tray -->
<svg style="left:1005px;top:736px" width="23" height="24" viewBox="0 0 23 24"><circle cx="7.4" cy="12" r="7" fill="#e8820c"/><circle cx="14.4" cy="8" r="7.6" fill="#f59a1c"/><circle cx="14.8" cy="7.4" r="5" fill="#f9b347"/><path d="M9 15.6 H23 L16 23.4 Z" fill="#e5314a"/></svg>
<span class="t" style="font-size:14px;top:741.02px;color:#fff;left:1036.5px;letter-spacing:-0.788px;">USD/RUB</span><span class="t" style="font-size:14px;top:741.02px;color:#e85a5f;left:1104.3px;letter-spacing:-0.493px;">-0.96%</span>
<svg style="left:1170.6px;top:744px" width="13" height="8" viewBox="0 0 13 8"><path d="M0.8 7.2 L6.5 1.2 L12.2 7.2" fill="none" stroke="#fff" stroke-width="1.3"/></svg>
<svg style="left:1193.6px;top:743.8px" width="15.6" height="9.6" viewBox="0 0 16 10"><rect x="0.6" y="0.6" width="13" height="8.8" rx="1" fill="none" stroke="#fff" stroke-width="1.2"/><rect x="2.4" y="2.6" width="6.6" height="4.8" fill="#fff"/><rect x="14.2" y="3" width="1.6" height="4" fill="#fff"/></svg>
<span class="t" style="font-size:12px;top:742.02px;color:#fff;left:1219.5px;letter-spacing:-1.205px;">ENG</span><span class="t" style="font-size:12px;top:733.02px;color:#fff;left:1259.7px;letter-spacing:-0.219px;">7:23 AM</span><span class="t" style="font-size:12px;top:751.02px;color:#fff;left:1258.5px;letter-spacing:-0.165px;">7/4/2024</span>
<svg style="left:1325px;top:740.4px" width="16.4" height="15.6" viewBox="0 0 16.4 15.6"><path d="M0.7 0.7 H15.7 V12.4 H10.4 L8.2 14.8 L6 12.4 H0.7 Z" fill="none" stroke="#fff" stroke-width="1.3" stroke-linejoin="miter"/></svg><div class="a" style="left:1361px;top:728px;width:1px;height:40px;background:#566173"></div>
</body></html>
